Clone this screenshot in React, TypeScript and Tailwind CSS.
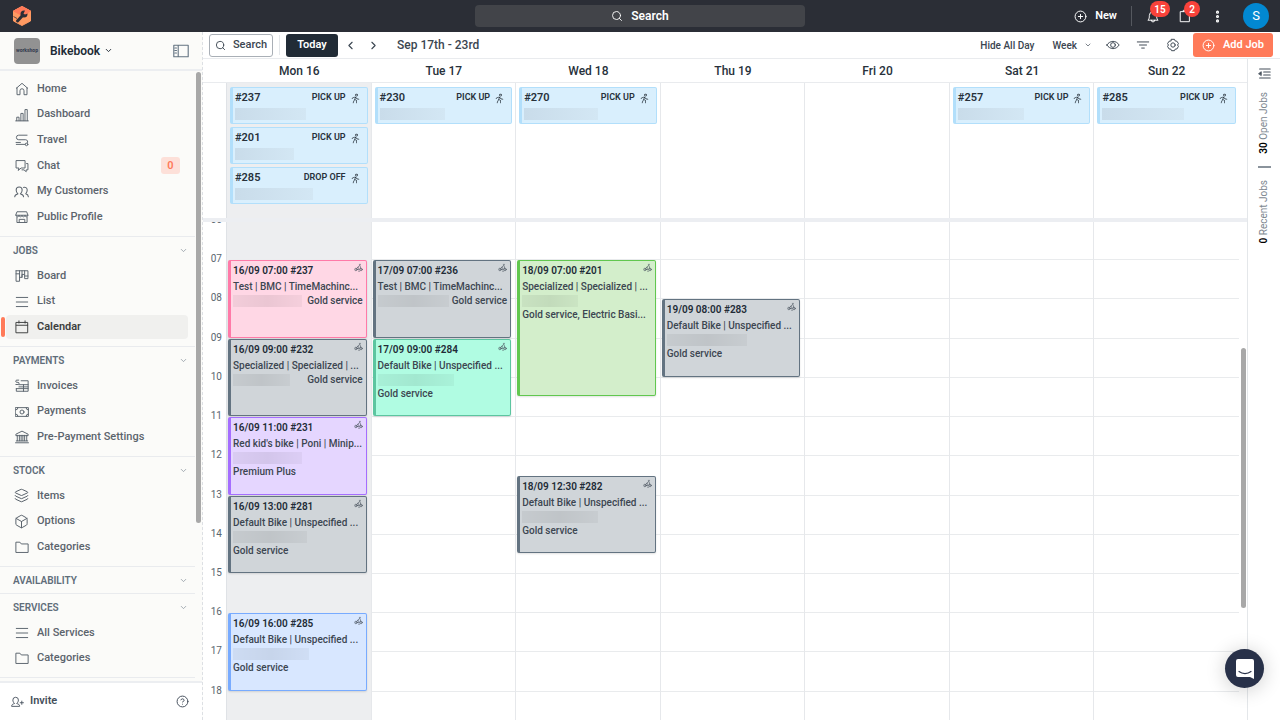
import type { ReactNode } from "react";
import clsx from "clsx";
import { Box, ChevronDown, ChevronLeft, ChevronRight, CircleHelp, CirclePlus, EllipsisVertical, Layers, Search } from "lucide-react";
import { PiPersonSimpleWalk } from "react-icons/pi";

type IconProps = { children: ReactNode; className?: string };

function Svg({ children, className = "size-[14px]" }: IconProps) {
	return (
		<svg
			viewBox="0 0 16 16"
			fill="none"
			stroke="currentColor"
			strokeWidth="1.1"
			strokeLinecap="round"
			strokeLinejoin="round"
			className={clsx("shrink-0", className)}
			aria-hidden="true"
		>
			{children}
		</svg>
	);
}

const icons = {
	home: (
		<Svg>
			<path d="M1.5 7.2 8 1.5l6.5 5.7M2.3 6.6v7.9h3.4V10a2.3 2.3 0 0 1 4.6 0v4.5h3.4V6.6" />
		</Svg>
	),
	dashboard: (
		<Svg>
			<path d="M.8 14.7h14.4M2 14.5v-4h2.6v4M6.7 14.5V6.2h2.6v8.3M11.4 14.5V1.8H14v12.7" />
		</Svg>
	),
	travel: (
		<Svg>
			<path d="M13.8 2.5H4.2a2.6 2.6 0 0 0 0 5.2h8a2.4 2.4 0 0 1 1.7 4M11.5 13H1.5M1.2 10.8h5" />
			<circle cx="13.2" cy="13" r="1.5" />
		</Svg>
	),
	chat: (
		<Svg>
			<path d="M4 10.3H1.2V1.8h10.3v8.5H7L4 12.8zM13.2 5.2h1.6v7.2h-2v2.1l-2.6-2.1H8" />
		</Svg>
	),
	customers: (
		<Svg className="size-[15px]">
			<path d="M.8 13.5c0-2 1.6-2.4 3.4-3-1.4-1.2-1.9-2.7-1.9-4.2a3.2 3.2 0 0 1 6.4 0c0 1.5-.5 3-1.9 4.2 1.8.6 3.4 1 3.4 3M10 3.6a3 3 0 0 1 4.1 2.8c0 1.5-.4 2.8-1.6 4 1.5.5 2.8 1.2 2.8 3.1" />
		</Svg>
	),
	profile: (
		<Svg>
			<path d="M2.7 2h10.6l1.5 4H1.2zM2.2 8v6.3h11.6V8M4.8 14v-3.3h6.4V14M1.2 6c0 2.4 3.3 2.4 3.4 0 0 2.4 3.3 2.4 3.4 0 0 2.4 3.3 2.4 3.4 0 0 2.4 3.3 2.4 3.4 0" />
		</Svg>
	),
	board: (
		<Svg>
			<path d="M1.2 2h13.6v9H11V6.5M1.2 2v12h4V2M5.2 9.5H8V6.2h3V2M8 9.5V2M11 8h3.8M1.2 5.5h4" />
		</Svg>
	),
	list: (
		<Svg>
			<path d="M1.5 2.8h13M1.5 8h13M1.5 13.2h13" />
		</Svg>
	),
	calendar: (
		<Svg>
			<path d="M1.5 2.8h13v11.8h-13zM1.5 6h13M4.5 1v2.5M11.5 1v2.5" />
		</Svg>
	),
	invoices: (
		<Svg>
			<path d="M7 2h8v12H1.5v-3M4.5 6.5H15M1.5 11H15M9.7 6.5V14M4.5 9H15M4.3 1.3H2.1a1.2 1.2 0 0 0 0 2.5h1.3a1.2 1.2 0 0 1 0 2.5H1" />
		</Svg>
	),
	payments: (
		<Svg>
			<path d="M.7 3h14.6v10H.7zM.7 5.7A2.7 2.7 0 0 0 3.4 3M12.6 3a2.7 2.7 0 0 0 2.7 2.7M.7 10.3A2.7 2.7 0 0 1 3.4 13M12.6 13a2.7 2.7 0 0 1 2.7-2.7" />
			<circle cx="8" cy="8" r="2.3" />
		</Svg>
	),
	bank: (
		<Svg>
			<path d="M1 6V4.8L8 1.3l7 3.5V6zM2.6 6v6.3M5 6v6.3M7 6v6.3M9 6v6.3M11 6v6.3M13.4 6v6.3M1.5 12.5h13M.6 14.6h14.8" />
		</Svg>
	),
	items: <Layers className="size-[15px]" strokeWidth={1.6} />,
	options: <Box className="size-[15px]" strokeWidth={1.6} />,
	folder: (
		<Svg>
			<path d="M1 13.8V2.5h4.6l1.6 2H15v9.3z" />
		</Svg>
	),
};

type NavItem = { label: string; icon: ReactNode; badge?: string; active?: boolean };
type NavSection = { title?: string; listClass?: string; items: NavItem[] };

const sections: NavSection[] = [
	{
		listClass: "h-[154px]",
		items: [
			{ label: "Home", icon: icons.home },
			{ label: "Dashboard", icon: icons.dashboard },
			{ label: "Travel", icon: icons.travel },
			{ label: "Chat", icon: icons.chat, badge: "0" },
			{ label: "My Customers", icon: icons.customers },
			{ label: "Public Profile", icon: icons.profile },
		],
	},
	{
		title: "JOBS",
		listClass: "h-[77px]",
		items: [
			{ label: "Board", icon: icons.board },
			{ label: "List", icon: icons.list },
			{ label: "Calendar", icon: icons.calendar, active: true },
		],
	},
	{
		title: "PAYMENTS",
		listClass: "h-[77px]",
		items: [
			{ label: "Invoices", icon: icons.invoices },
			{ label: "Payments", icon: icons.payments },
			{ label: "Pre-Payment Settings", icon: icons.bank },
		],
	},
	{
		title: "STOCK",
		listClass: "h-[77px]",
		items: [
			{ label: "Items", icon: icons.items },
			{ label: "Options", icon: icons.options },
			{ label: "Categories", icon: icons.folder },
		],
	},
	{ title: "AVAILABILITY", items: [] },
	{
		title: "SERVICES",
		listClass: "h-[51px]",
		items: [
			{ label: "All Services", icon: icons.list },
			{ label: "Categories", icon: icons.folder },
		],
	},
];

type AllDayJob = { id: string; type: string; bar: string };
type Job = {
	time: string;
	id: string;
	title: string;
	service: string;
	inline?: boolean;
	rows: string;
	tone: string;
	bar: string;
};
type Day = { label: string; today?: boolean; allDay: AllDayJob[]; jobs: Job[] };

const grey = "bg-[#d0d5d9] border-[#637381]";

const days: Day[] = [
	{
		label: "Mon 16",
		today: true,
		allDay: [
			{ id: "#237", type: "PICK UP", bar: "w-[71px]" },
			{ id: "#201", type: "PICK UP", bar: "w-[59px]" },
			{ id: "#285", type: "DROP OFF", bar: "w-[78px]" },
		],
		jobs: [
			{ time: "16/09 07:00", id: "#237", title: "Test | BMC | TimeMachinc...", service: "Gold service", inline: true, rows: "row-[3/span_4]", tone: "bg-[#ffd7e5] border-[#ff7aa8]", bar: "w-[69px]" },
			{ time: "16/09 09:00", id: "#232", title: "Specialized | Specialized | ...", service: "Gold service", inline: true, rows: "row-[7/span_4]", tone: grey, bar: "w-[57px]" },
			{ time: "16/09 11:00", id: "#231", title: "Red kid's bike | Poni | Minip...", service: "Premium Plus", rows: "row-[11/span_4]", tone: "bg-[#e5d6ff] border-[#a56eff]", bar: "w-[69px]" },
			{ time: "16/09 13:00", id: "#281", title: "Default Bike | Unspecified ...", service: "Gold service", rows: "row-[15/span_4]", tone: grey, bar: "w-[74px]" },
			{ time: "16/09 16:00", id: "#285", title: "Default Bike | Unspecified ...", service: "Gold service", rows: "row-[21/span_4]", tone: "bg-[#d8e7ff] border-[#78abff]", bar: "w-[76px]" },
		],
	},
	{
		label: "Tue 17",
		allDay: [{ id: "#230", type: "PICK UP", bar: "w-[65px]" }],
		jobs: [
			{ time: "17/09 07:00", id: "#236", title: "Test | BMC | TimeMachinc...", service: "Gold service", inline: true, rows: "row-[3/span_4]", tone: grey, bar: "w-[71px]" },
			{ time: "17/09 09:00", id: "#284", title: "Default Bike | Unspecified ...", service: "Gold service", rows: "row-[7/span_4]", tone: "bg-[#b0fce2] border-[#5cc5a0]", bar: "w-[76px]" },
		],
	},
	{
		label: "Wed 18",
		allDay: [{ id: "#270", type: "PICK UP", bar: "w-[74px]" }],
		jobs: [
			{ time: "18/09 07:00", id: "#201", title: "Specialized | Specialized | ...", service: "Gold service, Electric Basi...", rows: "row-[3/span_7]", tone: "bg-[#d3eecb] border-[#61c74f]", bar: "w-[56px]" },
			{ time: "18/09 12:30", id: "#282", title: "Default Bike | Unspecified ...", service: "Gold service", rows: "row-[14/span_4]", tone: grey, bar: "w-[76px]" },
		],
	},
	{
		label: "Thu 19",
		allDay: [],
		jobs: [
			{ time: "19/09 08:00", id: "#283", title: "Default Bike | Unspecified ...", service: "Gold service", rows: "row-[5/span_4]", tone: grey, bar: "w-[80px]" },
		],
	},
	{ label: "Fri 20", allDay: [], jobs: [] },
	{ label: "Sat 21", allDay: [{ id: "#257", type: "PICK UP", bar: "w-[66px]" }], jobs: [] },
	{ label: "Sun 22", allDay: [{ id: "#285", type: "PICK UP", bar: "w-[82px]" }], jobs: [] },
];

const hours = ["06", "07", "08", "09", "10", "11", "12", "13", "14", "15", "16", "17", "18"];

function Logo() {
	return (
		<svg viewBox="0 0 36 40" className="h-5 w-[18px]" role="img" aria-label="Bikebook">
			<path d="M18 1 35 10v20l-17 9L1 30V10z" fill="#ff9a62" stroke="#ff9a62" strokeWidth="2" strokeLinejoin="round" />
			<path d="M18 1 35 10 18 19 1 10z" fill="#ff7a59" stroke="#ff7a59" strokeWidth="2" strokeLinejoin="round" />
			<path d="M9 30 20 18" stroke="#2b2e36" strokeWidth="6" strokeLinecap="round" />
			<circle cx="22" cy="16" r="7" fill="#2b2e36" />
			<path d="M21 15.500 25 7l7 7-8 3z" fill="#ff7a59" />
			<path d="M1 21 8 25" stroke="#2b2e36" strokeWidth="1.500" />
		</svg>
	);
}

function TopBar() {
	return (
		<header className="grid h-8 shrink-0 grid-cols-[1fr_330px_1fr] items-center bg-[#2b2e36] text-white">
			<a href="#home" className="ml-[13px] w-fit">
				<Logo />
			</a>
			<button className="flex h-[22px] items-center justify-center gap-2 rounded bg-[#424449] text-[12px] font-semibold">
				<Search className="size-3" strokeWidth={1.8} />
				Search
			</button>
			<div className="flex items-center justify-end pr-[11px]">
				<button className="flex items-center gap-2 text-[11px] font-semibold">
					<CirclePlus className="size-[13px]" strokeWidth={1.8} />
					New
				</button>
				<span className="ml-[14px] h-5 w-px bg-[#55585f]" />
				<button className="relative ml-[14px]" aria-label="Notifications">
					<Svg className="size-[14px]">
						<path d="M2.5 12.5c1.3-1.2 1.3-2.8 1.3-5a4.2 4.2 0 0 1 8.4 0c0 2.2 0 3.8 1.3 5zM6 12.8a2 2 0 0 0 4 0" />
					</Svg>
					<span className="absolute -top-2 left-1 flex h-4 w-5 items-center justify-center rounded-full bg-[#f9423a] text-[10px] font-semibold">
						15
					</span>
				</button>
				<button className="relative ml-[18px]" aria-label="Tasks">
					<Svg className="size-[14px]">
						<path d="M3 3h10v11.5H3zM6 3V1.5h4V3" />
					</Svg>
					<span className="absolute -top-2 left-[6px] flex size-4 items-center justify-center rounded-full bg-[#f9423a] text-[10px] font-semibold">
						2
					</span>
				</button>
				<button className="ml-[18px]" aria-label="More">
					<EllipsisVertical className="size-[15px]" strokeWidth={3} />
				</button>
				<button className="ml-[18px] flex size-[26px] items-center justify-center rounded-full bg-[#0288d1] text-[13px]">
					S
				</button>
			</div>
		</header>
	);
}

function Sidebar() {
	return (
		<aside className="flex w-[203px] shrink-0 flex-col border-r border-dashed border-[#dde0e4] bg-[#fbfbf9]">
			<div className="flex h-[39px] shrink-0 items-center border-b-2 border-[#eceef1] pl-[14px] pr-[13px]">
				<span className="flex size-[26px] flex-col items-center justify-center rounded bg-[#929292] text-[5px] font-bold leading-[5px] text-[#31384d]">
					workshop
				</span>
				<button className="ml-[10px] flex items-center gap-1 text-[12px] font-semibold text-[#212b36]">
					Bikebook
					<ChevronDown className="size-[9px]" strokeWidth={2.5} />
				</button>
				<button className="ml-auto text-[#637381]" aria-label="Collapse sidebar">
					<Svg className="size-4">
						<path d="M.8 2.3h14.4v11.4H.8zM5.2 2.3v11.4M2 5h1.5M2 7.5h1.5M2 10h1.5" />
					</Svg>
				</button>
			</div>
			<div className="flex min-h-0 flex-1">
				<nav className="min-w-0 flex-1 overflow-hidden">
					{sections.map((section) => (
						<section key={section.title ?? "main"} className={clsx("border-b border-[#e9ebee]", section.items.length > 0 && "pb-[6px]")}>
							{section.title ? (
								<button className="flex h-[26px] w-full items-center justify-between pl-[13px] pr-[7px] text-[10px] font-semibold text-[#5f6d7a]">
									{section.title}
									<ChevronDown className="size-[9px] text-[#8a949e]" strokeWidth={2} />
								</button>
							) : (
								<div className="h-[5px]" />
							)}
							{section.items.length > 0 && (
								<ul className={clsx("flex flex-col", section.listClass)}>
									{section.items.map((item) => (
										<li key={item.label} className="flex flex-1 items-center">
											<span className={clsx("ml-px h-5 w-1 rounded-sm", item.active && "bg-[#ff7a59]")} />
											<a
												href={"#" + item.label.toLowerCase().replace(/ /g, "-")}
												className={clsx(
													"ml-px mr-[7px] flex h-6 flex-1 items-center rounded pl-2 pr-2 text-[11px]",
													item.active ? "bg-[#f0f0ee] font-semibold text-[#3d3f40]" : "font-medium text-[#5b646d]"
												)}
											>
												<span className="flex w-[15px] justify-center">{item.icon}</span>
												<span className="ml-2">{item.label}</span>
												{item.badge && (
													<span className="ml-auto flex h-[17px] w-[19px] items-center justify-center rounded-[3px] bg-[#fde0d9] font-semibold text-[#ff7a59]">
														{item.badge}
													</span>
												)}
											</a>
										</li>
									))}
								</ul>
							)}
						</section>
					))}
				</nav>
				<div className="w-[7px] shrink-0 pl-px pt-px">
					<div className="h-[74%] w-[5px] rounded-full bg-[#a8a8a8]" />
				</div>
			</div>
			<div className="flex h-[39px] shrink-0 items-center justify-between border-t-2 border-[#eceef1] bg-white pl-[11px] pr-[13px] text-[#454f5b]">
				<button className="flex items-center gap-[6px] text-[11px] font-semibold">
					<Svg className="size-[13px]">
						<path d="M.8 13.5c0-2 1.6-2.4 3.6-3C3 9.3 2.3 7.8 2.3 6.2a3.4 3.4 0 0 1 6.8 0c0 1.6-.7 3.1-2.1 4.3 2 .6 3.6 1 3.6 3zM13.3 7.5v4M11.3 9.5h4" />
					</Svg>
					Invite
				</button>
				<button aria-label="Help">
					<CircleHelp className="size-[13px]" strokeWidth={1.8} />
				</button>
			</div>
		</aside>
	);
}

function Toolbar() {
	return (
		<div className="flex h-[27px] shrink-0 items-center border-b border-[#e9ebee] pl-[6px] pr-[7px] text-[11px] font-medium text-[#3b4651]">
			<button className="flex h-[23px] w-16 items-center justify-center gap-[7px] rounded-[3px] border border-[#a9afb6]">
				<Search className="size-[11px]" strokeWidth={2} />
				Search
			</button>
			<span className="ml-[6px] h-5 w-px bg-[#e4e7ea]" />
			<button className="ml-[6px] h-[23px] w-[52px] rounded-[3px] bg-[#212b36] font-semibold text-white">Today</button>
			<button className="ml-[6px]" aria-label="Previous week">
				<ChevronLeft className="size-[13px]" strokeWidth={2} />
			</button>
			<button className="ml-[10px]" aria-label="Next week">
				<ChevronRight className="size-[13px]" strokeWidth={2} />
			</button>
			<span className="ml-[17px] text-[12px]">Sep 17th - 23rd</span>
			<button className="ml-auto text-[10px]">Hide All Day</button>
			<button className="ml-[18px] flex items-center gap-[7px] text-[10px]">
				Week
				<ChevronDown className="size-2" strokeWidth={2} />
			</button>
			<button className="ml-[14px]" aria-label="Visibility">
				<Svg className="size-[14px]">
					<path d="M1 8c3.5-5.6 10.5-5.6 14 0-3.5 5.6-10.5 5.6-14 0z" />
					<circle cx="8" cy="8" r="2.7" />
				</Svg>
			</button>
			<button className="ml-4" aria-label="Filter">
				<Svg className="size-[14px]">
					<path d="M1.5 4.5h13M4 8h8M6.5 11.5h3" />
				</Svg>
			</button>
			<button className="ml-4" aria-label="Settings">
				<Svg className="size-[14px]">
					<path d="m6.3 1.5h3.4l.8 1.900 2 .3 1.700 2.700-1 1.600 1 1.600-1.700 2.900-2 .2-.8 1.800H6.300l-.8-1.800-2-.2-1.700-2.900 1-1.600-1-1.600 1.700-2.700 2-.3z" />
					<circle cx="8" cy="8" r="2.5" />
				</Svg>
			</button>
			<button className="ml-[13px] flex h-6 w-20 items-center justify-center gap-2 rounded-[3px] bg-[#ff7a59] font-semibold text-white">
				<CirclePlus className="size-[13px]" strokeWidth={1.8} />
				Add Job
			</button>
		</div>
	);
}

function AllDayCard({ job }: { job: AllDayJob }) {
	return (
		<li className="h-[37px] rounded-[2px] border border-l-[3px] border-[#b2dffb] bg-[#d9effd] pl-[2px] pr-[6px] pt-[2px]">
			<div className="flex items-center text-[#27313b]">
				<span className="text-[11px] font-semibold leading-4">{job.id}</span>
				<span className="ml-auto text-[9px] font-semibold">{job.type}</span>
				<PiPersonSimpleWalk className="ml-1 size-[11px]" />
			</div>
			<div className={clsx("mt-[2px] h-3 bg-linear-to-r from-[#c9dcea] to-[#d3e7f4]", job.bar)} />
		</li>
	);
}

function BikeIcon() {
	return (
		<Svg className="size-[9px] text-[#4c5661]">
			<circle cx="3.5" cy="11.5" r="2.3" />
			<circle cx="12.5" cy="11.5" r="2.3" />
			<path d="M3.5 11.5 7 7l2.5 4.5h-4M7 7l3.5-3 2 7.5M9.5 2.5h2M8 14.5h2" />
		</Svg>
	);
}

function JobCard({ job }: { job: Job }) {
	return (
		<li
			className={clsx(
				"mt-px ml-px mr-1 overflow-hidden rounded-[2px] border border-l-[3px] pl-[2px] pr-[3px] pt-[2px] text-[10px] font-medium text-[#3c4651] shadow-[0_1px_2px_rgba(0,0,0,0.12)]",
				job.rows,
				job.tone
			)}
		>
			<div className="flex justify-between font-semibold leading-4 text-[#212b36]">
				<span>
					{job.time} {job.id}
				</span>
				<BikeIcon />
			</div>
			<p className="whitespace-nowrap leading-4">{job.title}</p>
			<div className={clsx(job.inline && "flex items-start justify-between")}>
				<div className={clsx("h-3 bg-linear-to-r from-black/5 via-black/8 to-black/4", job.bar)} />
				<p className={clsx("whitespace-nowrap", job.inline ? "leading-3" : "leading-4")}>{job.service}</p>
			</div>
		</li>
	);
}

function Calendar() {
	return (
		<div className="flex min-w-0 flex-1 flex-col">
			<div className="grid h-6 shrink-0 grid-cols-[24px_repeat(7,minmax(0,1fr))_8px] items-center border-b border-[#e9ebee] text-center text-[12px] font-medium text-[#27313b]">
				<span />
				{days.map((day) => (
					<h2 key={day.label}>{day.label}</h2>
				))}
			</div>
			<div className="grid h-[135px] shrink-0 grid-cols-[24px_repeat(7,minmax(0,1fr))_8px]">
				<span className="border-r border-[#dfe2e6]" />
				{days.map((day) => (
					<ul
						key={day.label}
						className={clsx(
							"flex flex-col gap-[3px] border-[#e6e8eb] px-[3px] pt-1 not-last:border-r",
							day.today && "bg-[#edeef0]"
						)}
					>
						{day.allDay.map((job) => (
							<AllDayCard key={job.id} job={job} />
						))}
					</ul>
				))}
			</div>
			<div className="h-1 shrink-0 bg-[#eceef2]" />
			<div className="flex min-h-0 flex-1 overflow-hidden">
				<div className="-mt-[2px] grid h-[549px] flex-1 grid-cols-[24px_repeat(7,minmax(0,1fr))]">
					<div className="col-start-1 row-start-1 grid grid-rows-14 border-r border-[#dfe2e6] pr-1 text-right text-[10px] leading-4 text-[#5b6670]">
						{hours.map((hour) => (
							<span key={hour} className="-mt-2">
								{hour}
							</span>
						))}
					</div>
					<div className="col-[2/9] row-start-1 grid grid-rows-14">
						{hours.map((hour) => (
							<span key={hour} className="border-t border-[#e9ebed]" />
						))}
					</div>
					{days.map((day, index) => (
						<ul
							key={day.label}
							style={{ gridColumnStart: index + 2 }}
							className={clsx(
								"row-start-1 grid grid-rows-[repeat(28,minmax(0,1fr))] border-[#e6e8eb] not-last:border-r",
								day.today && "bg-[#edeef0]"
							)}
						>
							{day.jobs.map((job) => (
								<JobCard key={job.time + job.id} job={job} />
							))}
						</ul>
					))}
				</div>
				<div className="flex w-2 shrink-0 flex-col pl-[2px]">
					<div className="mt-[126px] h-[260px] w-[5px] rounded-full bg-[#a8a8a8]" />
				</div>
			</div>
		</div>
	);
}

function JobsRail() {
	return (
		<aside className="flex w-[33px] shrink-0 flex-col items-center border-l border-[#e4e7ea] pt-2 text-[10px] leading-4 text-[#7d8790]">
			<button className="text-[#454f5b]" aria-label="Open jobs panel">
				<Svg className="size-[13px]">
					<path strokeWidth="1.4" d="M2 2.5h13M7 6.2h8M7 9.8h8M2 13.5h13" />
					<path fill="currentColor" strokeWidth="1" d="M1 8l3-2.200v4.400z" />
				</Svg>
			</button>
			<button className="mt-3 rotate-180 [writing-mode:vertical-rl]">
				<b className="font-semibold text-black">30</b> Open Jobs
			</button>
			<span className="my-3 h-[2px] w-[13px] shrink-0 bg-[#8a939c]" />
			<button className="rotate-180 [writing-mode:vertical-rl]">
				<b className="font-semibold text-black">0</b> Recent Jobs
			</button>
		</aside>
	);
}

export default function App() {
	return (
		<div className="flex h-screen flex-col overflow-hidden bg-white font-['Roboto',sans-serif]">
			<TopBar />
			<div className="flex min-h-0 flex-1">
				<Sidebar />
				<main className="flex min-w-0 flex-1 flex-col">
					<Toolbar />
					<div className="flex min-h-0 flex-1">
						<Calendar />
						<JobsRail />
					</div>
				</main>
			</div>
			<button
				className="absolute right-4 bottom-8 flex size-[39px] items-center justify-center rounded-full bg-[#283149] shadow-[0_2px_20px_rgba(0,0,0,0.2)]"
				aria-label="Open chat"
			>
				<svg viewBox="0 0 18 20" className="h-5 w-[18px]">
					<path d="M2 0h14a2 2 0 0 1 2 2v18l-4-2H2a2 2 0 0 1-2-2V2a2 2 0 0 1 2-2z" fill="#fff" />
					<path d="M3 12.5c3.5 2.7 8.5 2.7 12 0" fill="none" stroke="#283149" strokeWidth="1.2" strokeLinecap="round" />
				</svg>
			</button>
		</div>
	);
}
